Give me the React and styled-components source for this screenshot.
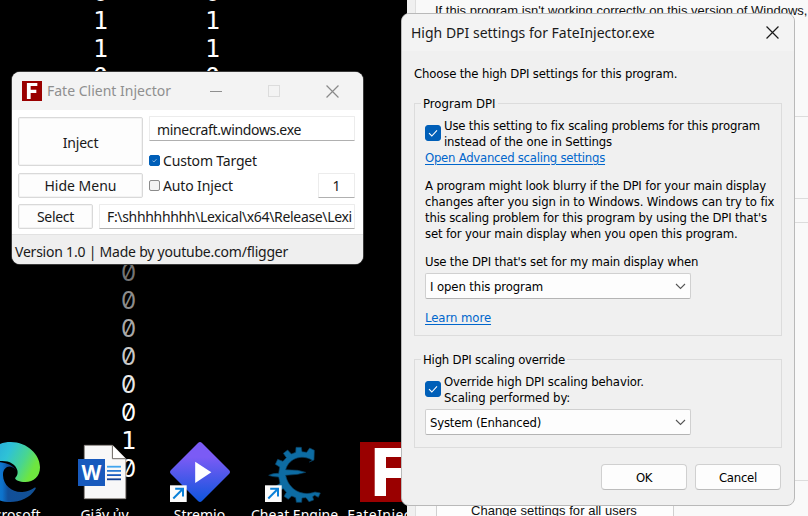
import React from "react";
import styled, { createGlobalStyle } from "styled-components";

const Global = createGlobalStyle`
  * { box-sizing: border-box; }
  body { margin: 0; background: #000; overflow: hidden; }
`;

const segoe = `"Noto Sans", "Open Sans", sans-serif`;
const tahoma = `"DejaVu Sans Condensed", "DejaVu Sans", sans-serif`;

const Desktop = styled.main`
  position: relative;
  width: 808px;
  height: 516px;
  overflow: hidden;
  background: #000;
  white-space: nowrap;
`;

const Text = styled.span`
  display: block;
  letter-spacing: ${(p) => p.$ls || 0}px;
`;

/* Wallpaper digits */
const Rain = styled.div`
  display: flex;
  padding-left: 86.5px;
  height: 516px;
  margin-top: -21px;
`;
const Column = styled.div`
  flex: 0 0 28px;
`;
const Digit = styled.div`
  height: 28px;
  text-align: center;
  color: ${(p) => p.$color};
  font: ${(p) => (p.$zero ? `24px/28px Inter, sans-serif` : `25px/28px "DejaVu Sans Mono", monospace`)};
  font-feature-settings: "zero" 1;
`;
const Gap = styled.div`
  height: ${(p) => p.$rows * 28}px;
`;

/* Desktop icons */
const IconRow = styled.div`
  position: absolute;
  left: -38px;
  top: 442px;
  display: flex;
`;
const Shortcut = styled.div`
  width: 95px;
  display: flex;
  flex-direction: column;
  align-items: center;
  color: #fff;
  font: 14px/20px ${segoe};
  svg { display: block; overflow: visible; }
`;
const Label = styled(Text)`
  margin-top: 3px;
`;

/* Properties window behind the dialog */
const Properties = styled.section`
  position: absolute;
  left: 407px;
  top: 0;
  width: 401px;
  height: 516px;
  padding-left: 8px;
  background: #f0f0f0;
  color: #111;
  font: 13px/16px "Liberation Sans", sans-serif;
`;
const TabPage = styled.div`
  height: 516px;
  border-left: 1px solid #dedede;
  background: #f9f9f9;
`;
const Intro = styled.p`
  margin: 0;
  height: 117px;
  padding: 3px 0 0 19px;
  border-bottom: 1px solid #dcdcdc;
`;
const Section = styled.div`
  height: ${(p) => p.$h}px;
  border-bottom: 1px solid #dcdcdc;
`;
const AllUsers = styled.div`
  width: 238px;
  margin-left: 20px;
  padding: 22px 0 0 34px;
  border: solid #d0d0d0;
  border-width: 0 1px;
  background: #fdfdfd;
`;

/* High DPI dialog */
const Dialog = styled.section`
  position: absolute;
  left: 401px;
  top: 13px;
  width: 394px;
  height: 493px;
  border: 1px solid #b9b9b9;
  border-radius: 8px;
  background: #f0f0f0;
  overflow: hidden;
  color: #000;
  font: 13px/18px ${tahoma};
`;
const DialogTitle = styled.header`
  height: 37px;
  display: flex;
  align-items: center;
  justify-content: space-between;
  padding: 0 15px 0 9px;
  background: #f3f3f3;
  color: #1a1a1a;
  font: 14px/20px ${segoe};
`;
const DialogBody = styled.div`
  padding: 14px 13px 0 12px;
  ${Text} { height: 16px; }
`;
const Group = styled.fieldset`
  min-width: 0;
  margin: ${(p) => p.$top}px -1px 0 0;
  padding: 5px 10px ${(p) => p.$bottom}px;
  border: 1px solid #dcdcdc;
`;
const Legend = styled.legend`
  height: 17px;
  margin-left: -4px;
  padding: 0 2px;
`;
const CheckRow = styled.label`
  display: flex;
  align-items: center;
  gap: 3px;
`;
const Box = styled.span`
  flex: none;
  width: ${(p) => p.$size}px;
  height: ${(p) => p.$size}px;
  border-radius: ${(p) => (p.$size > 12 ? 3 : 2)}px;
  border: 1px solid ${(p) => (p.$on ? "#005fb8" : "#8b8b8b")};
  background: ${(p) => (p.$on ? "#005fb8" : "#f3f3f3")};
  display: grid;
  place-items: center;
`;
const Link = styled.a`
  display: block;
  width: fit-content;
  height: 16px;
  margin-top: ${(p) => p.$top || 0}px;
  color: #0066cc;
  text-decoration: underline;
  text-underline-offset: 2px;
  letter-spacing: ${(p) => p.$ls}px;
`;
const Paragraph = styled.div`
  margin-top: 12px;
`;
const Select = styled.div`
  width: 266px;
  height: 26px;
  margin-top: 4px;
  padding: 0 4px;
  display: flex;
  align-items: center;
  justify-content: space-between;
  border: 1px solid #d0d0d0;
  border-bottom-color: #b4b4b4;
  border-radius: 2px;
  background: #fdfdfd;
`;
const Actions = styled.footer`
  display: flex;
  justify-content: flex-end;
  gap: 8px;
  margin-top: 16px;
`;
const DialogButton = styled.button`
  width: 86px;
  height: 26px;
  padding: 0;
  display: grid;
  place-items: center;
  border: 1px solid #d0d0d0;
  border-bottom-color: #bcbcbc;
  border-radius: 4px;
  background: #fdfdfd;
  color: #000;
  font: inherit;
`;

/* Injector window */
const Injector = styled.section`
  position: absolute;
  left: 12px;
  top: 72px;
  width: 351px;
  height: 192px;
  border-radius: 8px;
  overflow: hidden;
  background: #fff;
  box-shadow: 0 0 0 1px #3a3a3a;
  color: #191919;
  font: 14px/20px ${segoe};
`;
const InjectorTitle = styled.header`
  height: 38px;
  display: flex;
  align-items: center;
  gap: 5px;
  padding: 0 24px 0 10px;
  background: #f3f3f3;
  color: #8f8f8f;
`;
const Controls = styled.div`
  margin-left: auto;
  display: flex;
  gap: 46px;
  svg { display: block; }
`;
const InjectorBody = styled.div`
  height: 124px;
  padding: 6px 8px 0 6px;
`;
const Columns = styled.div`
  display: flex;
  gap: 6px;
  margin-bottom: 6px;
`;
const Stack = styled.div`
  width: 125px;
  padding-top: 1px;
  display: flex;
  flex-direction: column;
  gap: 7px;
`;
const Fields = styled.div`
  flex: 1;
`;
const Button = styled.button`
  width: ${(p) => p.$w}px;
  height: ${(p) => p.$h}px;
  padding: ${(p) => p.$drop || 0}px 0 0;
  display: grid;
  place-items: center;
  border: 1px solid #d9d9d9;
  border-radius: 2px;
  background: #fdfdfd;
  color: #191919;
  font: inherit;
  box-shadow: inset 0 0 0 1px #f3f3f3;
`;
const Input = styled.div`
  flex: ${(p) => (p.$w ? "none" : 1)};
  width: ${(p) => (p.$w ? `${p.$w}px` : "auto")};
  height: 25px;
  padding: ${(p) => (p.$w ? 0 : "0 0 0 7px")};
  text-align: ${(p) => (p.$w ? "center" : "left")};
  line-height: ${(p) => p.$line || 24}px;
  overflow: hidden;
  border: 1px solid #ececec;
  border-bottom-color: #b0b0b0;
  border-radius: 1px;
  background: #fff;
`;
const Option = styled.div`
  display: flex;
  align-items: center;
  gap: 3px;
  height: 25px;
  margin-top: ${(p) => p.$top || 0}px;
`;
const Push = styled.div`
  margin-left: auto;
`;
const Status = styled.footer`
  height: 30px;
  padding: 7px 3px 0;
  border-top: 1px solid #e2e2e2;
  background: #efefef;
`;

const Check = ({ size, on }) => (
  <Box $size={size} $on={on}>
    {on && (
      <svg width={size - 6} height={size - 6} viewBox="0 0 10 10" fill="none" stroke="#fff" strokeWidth="1.1">
        <path d="M1 5.2 3.8 8 9 2.3" />
      </svg>
    )}
  </Box>
);

const Cross = ({ size, color }) => (
  <svg width={size} height={size} viewBox="0 0 12 12" stroke={color} strokeWidth="1.1">
    <path d="M.5.5l11 11M11.5.5l-11 11" />
  </svg>
);

const Chevron = () => (
  <svg width="11" height="7" viewBox="0 0 11 7" fill="none" stroke="#555" strokeWidth="1.1">
    <path d="M1 1l4.5 4.5L10 1" />
  </svg>
);

const FateLogo = ({ size }) => (
  <svg width={size} height={size} viewBox="0 0 60 60">
    <path d="M0 0h60v60H0z" fill="#9a0000" />
    <path d="M14.7 6H46v9H26v11h17v10H26v18H14.7z" fill="#fff" />
  </svg>
);

const ShortcutArrow = () => (
  <g>
    <path d="M0 43.3h16.7V60H0z" fill="#fbfbfb" />
    <path d="M3.3 56.5 12.5 47.3M5.2 46.8h7.8v7.8" fill="none" stroke="#0a80d8" strokeWidth="2" />
  </g>
);

const EdgeLogo = () => (
  <svg width="60" height="60" viewBox="0 0 180 180">
    <defs>
      <linearGradient id="edgeTop" x1="0" y1="0" x2="1" y2=".35">
        <stop offset="0" stopColor="#219be0" />
        <stop offset=".5" stopColor="#2fc2d6" />
        <stop offset=".78" stopColor="#48d592" />
        <stop offset="1" stopColor="#6ee63f" />
      </linearGradient>
      <linearGradient id="edgeLow" x1="0" y1="0" x2="1" y2="0">
        <stop offset="0" stopColor="#1b9de6" />
        <stop offset=".4" stopColor="#0d72cb" />
        <stop offset=".5" stopColor="#114f99" />
        <stop offset="1" stopColor="#125195" />
      </linearGradient>
    </defs>
    <path d="M2 86C8 30 48 0 92 0c50 0 88 38 88 76 0 28-19 44-44 44-20 0-33-7-30-13 6-7 8-13 6-22-5-18-23-28-45-28C40 56 15 66 2 86z" fill="url(#edgeTop)" />
    <path d="M0 94c4-26 34-39 62-33 20 3 38 10 46 24-14-20-40-12-39 15 1 31 28 52 58 50 16-1 27-7 36-13 4-2 6 0 3 5-16 26-45 38-76 38C40 180 0 142 0 94z" fill="url(#edgeLow)" />
  </svg>
);

const WordLogo = () => (
  <svg width="60" height="60" viewBox="0 0 60 60">
    <path d="M9.3 3.3h28.3l13.2 13.4v40H9.3z" fill="#f8f8f8" stroke="#8b8580" strokeWidth=".8" />
    <path d="M37.4 3.3v13.4h13.4" fill="#fff" stroke="#6b6661" />
    <path d="M3 17h27v27H3z" fill="#185abd" />
    <text x="16.5" y="38" textAnchor="middle" fill="#fff" fontFamily="Open Sans" fontSize="20.5" fontWeight="700">W</text>
    <path d="M32 24.7h14" stroke="#41a5ee" strokeWidth="1.8" />
    <path d="M32 28.9h14" stroke="#2b7cd3" strokeWidth="1.8" />
    <path d="M32 33.1h14" stroke="#185abd" strokeWidth="1.8" />
    <path d="M32 37.3h14" stroke="#103f91" strokeWidth="1.8" />
  </svg>
);

const StremioLogo = () => (
  <svg width="60" height="60" viewBox="0 0 60 60">
    <defs>
      <linearGradient id="stremio" x1="0" y1="0" x2="0" y2="1">
        <stop offset=".25" stopColor="#7b5bf5" />
        <stop offset="1" stopColor="#0e55dc" />
      </linearGradient>
    </defs>
    <path d="M28 1q2-2 4 0l27 27q2 2 0 4L32 59q-2 2-4 0L1 32q-2-2 0-4z" fill="url(#stremio)" />
    <path d="M25.2 19.7v21.2L41.3 30.3z" fill="#fff" />
    <ShortcutArrow />
  </svg>
);

const CheatLogo = () => (
  <svg width="60" height="60" viewBox="0 0 180 180">
    <g fill="#0d6ca3" stroke="#093f60" strokeWidth="2" strokeLinejoin="round">
      <path d="M142 55C116 38 74 44 62 83l36 2 24 6-24 6-36 3c9 44 50 64 88 50l16 3-6 13-11-6-6 4 3 10-14 5-9-12-12 1-1 13-16 0-2-14-12-5-10 10-13-9 7-12-9-11-15 6-8-13 13-9-4-19c-9 0-20-1-30-5 10-5 20-6 30-6l3-19-13-8 7-15 16 6 10-11-9-13 13-10 11 12 13-5 1-15 16 0 2 13 14 2 9-13 14 7-1 29-14 6z" />
    </g>
    <g transform="scale(3)">
      <ShortcutArrow />
    </g>
  </svg>
);

const columns = [
  [{ digits: "0110" }],
  [{ gap: 10 }, { digits: "00000010" }],
  [],
  [],
  [{ digits: "0110" }],
];
const fade = ["#747474", "#8c8c8c", "#a8a8a8", "#c8c8c8", "#e8e8e8"];

const explanation = [
  ["A program might look blurry if the DPI for your main display", -0.16],
  ["changes after you sign in to Windows. Windows can try to fix", -0.13],
  ["this scaling problem for this program by using the DPI that's", -0.18],
  ["set for your main display when you open this program.", -0.17],
];

const icons = [
  ["Microsoft", EdgeLogo],
  ["Giấy ủy", WordLogo],
  ["Stremio", StremioLogo],
  ["Cheat Engine", CheatLogo],
  ["FateInjector", () => <FateLogo size={60} />, 0.45],
];

export default function App() {
  return (
    <Desktop>
      <Global />
      <Rain>
        {columns.map((runs, c) => (
          <Column key={c}>
            {runs.map((run, r) =>
              run.gap ? (
                <Gap key={r} $rows={run.gap} />
              ) : (
                [...run.digits].map((d, i) => (
                  <Digit key={`${r}-${i}`} $zero={d === "0"} $color={(r === 1 && fade[i]) || "#fff"}>{d}</Digit>
                ))
              )
            )}
          </Column>
        ))}
      </Rain>

      <IconRow>
        {icons.map(([name, Logo, ls]) => (
          <Shortcut key={name}>
            <Logo />
            <Label $ls={ls}>{name}</Label>
          </Shortcut>
        ))}
      </IconRow>

      <Properties>
        <TabPage>
          <Intro>If this program isn't working correctly on this version of Windows,</Intro>
          <Section $h={82} />
          <Section $h={24} />
          <Section $h={258} />
          <AllUsers><Text $ls={0.04}>Change settings for all users</Text></AllUsers>
        </TabPage>
      </Properties>

      <Injector>
        <InjectorTitle>
          <FateLogo size={20} />
          <Text>Fate Client Injector</Text>
          <Controls>
            <svg width="12" height="12"><path d="M0 6.5h12" stroke="#8f8f8f" /></svg>
            <svg width="12" height="12"><rect x=".5" y=".5" width="11" height="11" fill="none" stroke="#dcdcdc" /></svg>
            <Cross size={13} color="#8a8a8a" />
          </Controls>
        </InjectorTitle>
        <InjectorBody>
          <Columns>
            <Stack>
              <Button $w={125} $h={49} $drop={3}><Text $ls={-0.2}>Inject</Text></Button>
              <Button $w={125} $h={25}><Text>Hide Menu</Text></Button>
            </Stack>
            <Fields>
              <Input $line={26}><Text $ls={-0.34}>minecraft.windows.exe</Text></Input>
              <Option $top={7}><Check size={11} on /><Text $ls={-0.17}>Custom Target</Text></Option>
              <Option>
                <Check size={11} />
                <Text $ls={-0.13}>Auto Inject</Text>
                <Push><Input $w={37}>1</Input></Push>
              </Option>
            </Fields>
          </Columns>
          <Columns>
            <Button $w={75} $h={25}><Text $ls={-0.3}>Select</Text></Button>
            <Input><Text $ls={-0.33}>{"F:\\shhhhhhhh\\Lexical\\x64\\Release\\Lexi"}</Text></Input>
          </Columns>
        </InjectorBody>
        <Status><Text $ls={-0.22}>Version 1.0 | Made by youtube.com/fligger</Text></Status>
      </Injector>

      <Dialog>
        <DialogTitle>
          <Text>High DPI settings for FateInjector.exe</Text>
          <Cross size={13} color="#1a1a1a" />
        </DialogTitle>
        <DialogBody>
          <Text $ls={-0.17}>Choose the high DPI settings for this program.</Text>
          <Group $top={14} $bottom={10}>
            <Legend><Text>Program DPI</Text></Legend>
            <CheckRow>
              <Check size={16} on />
              <span>
                <Text $ls={-0.175}>Use this setting to fix scaling problems for this program</Text>
                <Text $ls={-0.15}>instead of the one in Settings</Text>
              </span>
            </CheckRow>
            <Link $ls={-0.26}>Open Advanced scaling settings</Link>
            <Paragraph>
              {explanation.map(([line, ls]) => <Text key={line} $ls={ls}>{line}</Text>)}
            </Paragraph>
            <Paragraph><Text $ls={-0.18}>Use the DPI that's set for my main display when</Text></Paragraph>
            <Select><Text $ls={-0.1}>I open this program</Text><Chevron /></Select>
            <Link $top={10} $ls={-0.06}>Learn more</Link>
          </Group>
          <Group $top={15} $bottom={12}>
            <Legend><Text $ls={-0.2}>High DPI scaling override</Text></Legend>
            <CheckRow>
              <Check size={16} on />
              <span>
                <Text $ls={-0.16}>Override high DPI scaling behavior.</Text>
                <Text $ls={-0.11}>Scaling performed by:</Text>
              </span>
            </CheckRow>
            <Select><Text $ls={-0.19}>System (Enhanced)</Text><Chevron /></Select>
          </Group>
          <Actions>
            <DialogButton><Text $ls={-0.4}>OK</Text></DialogButton>
            <DialogButton><Text $ls={-0.25}>Cancel</Text></DialogButton>
          </Actions>
        </DialogBody>
      </Dialog>
    </Desktop>
  );
}
